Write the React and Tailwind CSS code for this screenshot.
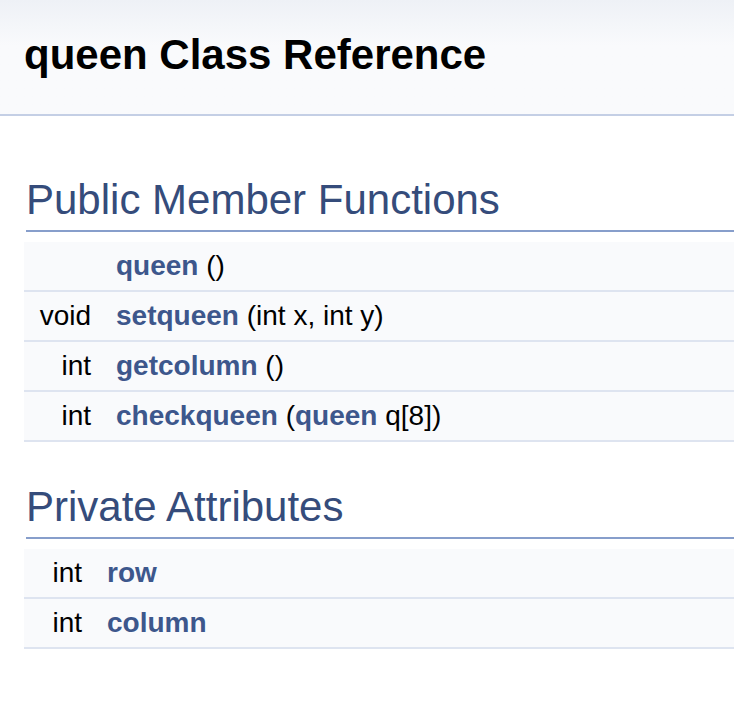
const font = { fontFamily: '"Liberation Sans", Arial, Helvetica, sans-serif' };

const publicRows = [
  { type: "", name: "queen", args: [" ()"] },
  { type: "void", name: "setqueen", args: [" (int x, int y)"] },
  { type: "int", name: "getcolumn", args: [" ()"] },
  { type: "int", name: "checkqueen", args: [" (", { link: "queen" }, " q[8])"] },
];

const privateRows = [
  { type: "int", name: "row", args: [] },
  { type: "int", name: "column", args: [] },
];

function Heading({ children, className }) {
  return (
    <h2
      className={`ml-[26px] pb-[6px] border-b-2 border-[#879ecb] text-[42px] leading-[48px] font-normal text-[#354c7b] ${className}`}
    >
      {children}
    </h2>
  );
}

function MemberTable({ rows, leftWidth }) {
  return (
    <div className="ml-[24px] mt-[10px]">
      {rows.map((r) => (
        <div
          key={r.name}
          className="flex h-[50px] bg-[#f9fafc] border-b-2 border-[#dee4f0] text-[28px] leading-[48px] text-black"
        >
          <div className="shrink-0 text-right pr-[25px] whitespace-nowrap" style={{ width: leftWidth }}>
            {r.type}
          </div>
          <div className="whitespace-nowrap">
            <a className="font-bold text-[#3d578c]">{r.name}</a>
            {r.args.map((a, i) =>
              typeof a === "string" ? (
                <span key={i} className="whitespace-pre">{a}</span>
              ) : (
                <a key={i} className="font-bold text-[#3d578c]">{a.link}</a>
              )
            )}
          </div>
        </div>
      ))}
    </div>
  );
}

export default function App() {
  return (
    <div className="w-[734px] h-[704px] bg-white overflow-hidden" style={font}>
      {/* header */}
      <div className="bg-gradient-to-b from-[#eef1f6] to-[#f9fafc] to-[40%] border-b-2 border-[#c4cfe5] pl-[24px] pt-[31px] pb-[35px]">
        <h1 className="text-[42px] leading-[48px] font-bold text-black">queen Class Reference</h1>
      </div>

      <Heading className="mt-[60px]">Public Member Functions</Heading>
      <MemberTable rows={publicRows} leftWidth={92} />

      <Heading className="mt-[41px]">Private Attributes</Heading>
      <MemberTable rows={privateRows} leftWidth={83} />
    </div>
  );
}
